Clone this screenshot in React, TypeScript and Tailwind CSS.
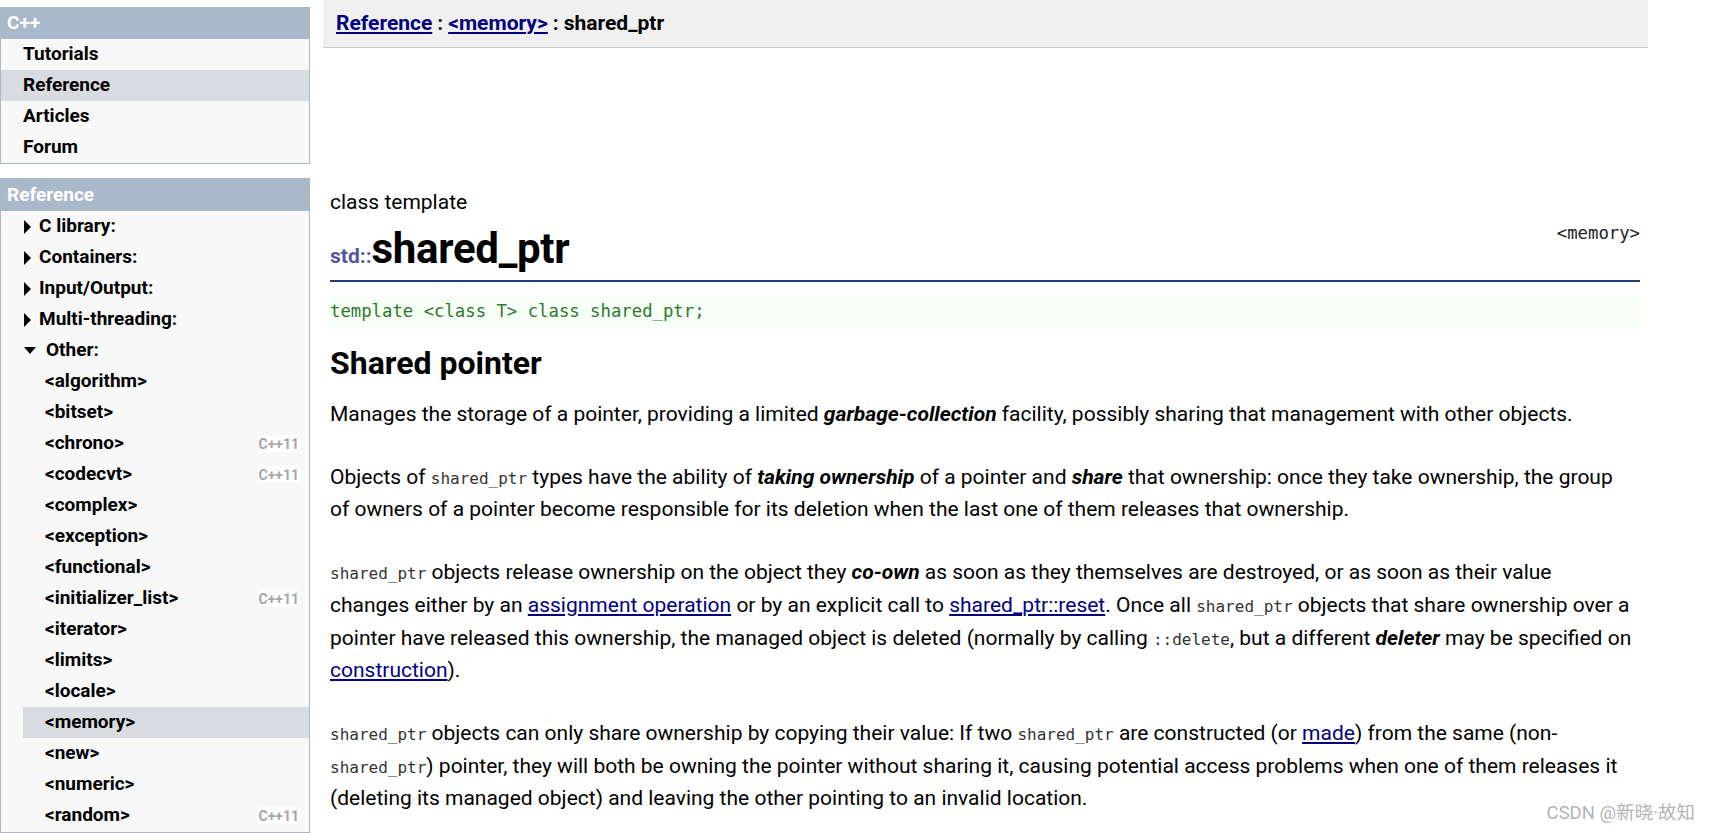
import React from "react";

const mono = "font-['DejaVu_Sans_Mono',monospace]";

function Code({ children }: { children: React.ReactNode }) {
  return <code className={`${mono} text-[16px] text-[#333]`}>{children}</code>;
}

function A({ children }: { children: React.ReactNode }) {
  return <a className="text-[#00007f] underline underline-offset-2 cursor-pointer">{children}</a>;
}

function Tri({ down }: { down?: boolean }) {
  return down ? (
    <svg width="12" height="8" viewBox="0 0 12 8" className="shrink-0">
      <path d="M0 0 L12 0 L6 7 Z" fill="#000" />
    </svg>
  ) : (
    <svg width="8" height="14" viewBox="0 0 8 14" className="shrink-0">
      <path d="M0 0 L7 7 L0 14 Z" fill="#000" />
    </svg>
  );
}

function Badge() {
  return (
    <span className="ml-auto mr-[9px] bg-white rounded-[3px] px-[1px] h-[17px] flex items-center text-[14px] font-bold text-[#a6a6a6] leading-none">
      C++11
    </span>
  );
}

const subs: { name: string; c11?: boolean; active?: boolean }[] = [
  { name: "<algorithm>" },
  { name: "<bitset>" },
  { name: "<chrono>", c11: true },
  { name: "<codecvt>", c11: true },
  { name: "<complex>" },
  { name: "<exception>" },
  { name: "<functional>" },
  { name: "<initializer_list>", c11: true },
  { name: "<iterator>" },
  { name: "<limits>" },
  { name: "<locale>" },
  { name: "<memory>", active: true },
  { name: "<new>" },
  { name: "<numeric>" },
  { name: "<random>", c11: true },
];

export default function App() {
  return (
    <div className="relative h-[833px] w-[1709px] overflow-hidden bg-white font-['Roboto',sans-serif] text-black flex">
      {/* Sidebar */}
      <div className="w-[310px] shrink-0 flex flex-col pt-[7px]">
        <div className="border border-[#a9b9ca] bg-[#f8f8f8]">
          <div className="h-[31px] bg-[#a9b9ca] text-white font-bold text-[19px] flex items-center px-[6px]">
            C++
          </div>
          {["Tutorials", "Reference", "Articles", "Forum"].map((t) => (
            <div
              key={t}
              className={`h-[31px] flex items-center pl-[22px] font-bold text-[19px] ${
                t === "Reference" ? "bg-[#d8dce1]" : ""
              }`}
            >
              {t}
            </div>
          ))}
        </div>
        <div className="mt-[14px] border border-[#a9b9ca] bg-[#f8f8f8] flex-1">
          <div className="h-[32px] bg-[#a9b9ca] text-white font-bold text-[19px] flex items-center px-[6px]">
            Reference
          </div>
          {["C library:", "Containers:", "Input/Output:", "Multi-threading:"].map((t) => (
            <div key={t} className="h-[31px] flex items-center pl-[23px] gap-[7px] font-bold text-[19px]">
              <Tri />
              {t}
            </div>
          ))}
          <div className="h-[31px] flex items-center pl-[23px] gap-[10px] font-bold text-[19px]">
            <Tri down />
            Other:
          </div>
          {subs.map((s) => (
            <div
              key={s.name}
              className={`ml-[22px] h-[31px] flex items-center pl-[22px] font-bold text-[19px] ${
                s.active ? "bg-[#d8dce1]" : ""
              }`}
            >
              {s.name}
              {s.c11 && <Badge />}
            </div>
          ))}
        </div>
      </div>

      {/* Main */}
      <div className="ml-[13px] w-[1325px] shrink-0 flex flex-col">
        <div className="h-[48px] bg-[#f0f0f0] border-b border-[#c8c8c8] flex items-center pl-[13px] text-[21px] font-bold">
          <A>Reference</A>
          <span className="mx-[5px]">:</span>
          <A>&lt;memory&gt;</A>
          <span className="mx-[5px]">:</span>
          <span>shared_ptr</span>
        </div>

        <div className="pl-[7px] pr-[8px] pt-[140px]">
          <div className="text-[21px] leading-[28px]">class template</div>
          <div className="flex items-end justify-between h-[66px] border-b-2 border-[#223f7c]">
            <h1 className="flex items-baseline leading-[40px] mb-[4px]">
              <span className="text-[21px] font-bold text-[#5656a0]">std::</span>
              <span className="text-[42px] font-bold tracking-[-0.3px]">shared_ptr</span>
            </h1>
            <span className={`${mono} text-[17.3px] text-[#222] self-start mt-[5px]`}>&lt;memory&gt;</span>
          </div>
          <div className={`mt-[14px] h-[32px] bg-[#f8fff8] flex items-center ${mono} text-[17.3px] text-[#2a7a2a]`}>
            template &lt;class T&gt; class shared_ptr;
          </div>
          <h3 className="mt-[17px] text-[32px] font-bold leading-[36px]">Shared pointer</h3>

          <div className="text-[21px] leading-[31.7px] mt-[18px] whitespace-nowrap">
            <p>
              Manages the storage of a pointer, providing a limited <b><i>garbage-collection</i></b> facility,
              possibly sharing that management with other objects.
            </p>
            <p className="mt-[31px]">
              Objects of <Code>shared_ptr</Code> types have the ability of <b><i>taking ownership</i></b> of a
              pointer and <b><i>share</i></b> that ownership: once they take ownership, the group
              <br />
              of owners of a pointer become responsible for its deletion when the last one of them releases that
              ownership.
            </p>
            <p className="mt-[31px]">
              <Code>shared_ptr</Code> objects release ownership on the object they <b><i>co-own</i></b> as soon as
              they themselves are destroyed, or as soon as their value
              <br />
              changes either by an <A>assignment operation</A> or by an explicit call to{" "}
              <A>shared_ptr::reset</A>. Once all <Code>shared_ptr</Code> objects that share ownership over a
              <br />
              pointer have released this ownership, the managed object is deleted (normally by calling{" "}
              <Code>::delete</Code>, but a different <b><i>deleter</i></b> may be specified on
              <br />
              <A>construction</A>).
            </p>
            <p className="mt-[31px]">
              <Code>shared_ptr</Code> objects can only share ownership by copying their value: If two{" "}
              <Code>shared_ptr</Code> are constructed (or <A>made</A>) from the same (non-
              <br />
              <Code>shared_ptr</Code>) pointer, they will both be owning the pointer without sharing it, causing
              potential access problems when one of them releases it
              <br />
              (deleting its managed object) and leaving the other pointing to an invalid location.
            </p>
          </div>
        </div>
      </div>

      <div className="absolute right-[14px] top-[800px] text-[18.5px] text-[#b4b4b4] font-['Roboto','Noto_Sans_CJK_SC',sans-serif]">
        CSDN @新晓·故知
      </div>
    </div>
  );
}
